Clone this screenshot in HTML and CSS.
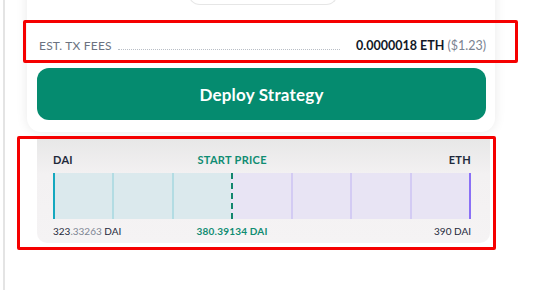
FILE: index.html
```html
<!DOCTYPE html>
<html lang="en">
<head>
    <meta charset="UTF-8">
    <meta name="viewport" content="width=device-width, initial-scale=1.0">
    <title>Deploy Strategy</title>
    <link rel="stylesheet" href="styles.css">
</head>
<body>
    <div class="page">
        <div class="rail"></div>
        <div class="main">
            <div class="card">
                <div class="pill"></div>
                <div class="fees">
                    <span class="fees-label">EST. TX FEES</span>
                    <span class="fees-dots"></span>
                    <span class="fees-value">0.0000018 ETH <span class="muted">($1.23)</span></span>
                </div>
                <button class="deploy">Deploy Strategy</button>
            </div>

            <!-- price range preview -->
            <div class="range">
                <div class="range-row range-head">
                    <span class="col-left">DAI</span>
                    <span class="col-mid green">START PRICE</span>
                    <span class="col-right">ETH</span>
                </div>
                <div class="bar">
                    <div class="seg buy edge-left"></div>
                    <div class="seg buy"></div>
                    <div class="seg buy"></div>
                    <div class="seg sell start"></div>
                    <div class="seg sell"></div>
                    <div class="seg sell"></div>
                    <div class="seg sell edge-right"></div>
                </div>
                <div class="range-row range-foot">
                    <span class="col-left">323<span class="muted">.33263</span> DAI</span>
                    <span class="col-mid green">380.39134 DAI</span>
                    <span class="col-right">390 DAI</span>
                </div>
            </div>
        </div>
    </div>

    <!-- annotation boxes -->
    <div class="mark mark-fees"></div>
    <div class="mark mark-range"></div>
</body>
</html>
```

FILE: styles.css
```css
body {
    margin: 0;
    padding: 0;
    font-family: 'Lato', 'Inter', sans-serif;
    background-color: #fff;
    overflow: hidden;
}

.page {
    display: flex;
    height: 290px;
}

.rail {
    width: 2px;
    margin-left: 3px;
    background-color: #e4e4e4;
}

.main {
    margin-left: 22px;
    width: 468px;
}

.card {
    margin-top: -20px;
    padding: 0 9px 12px 10px;
    background-color: #fff;
    border-radius: 0 0 14px 14px;
    box-shadow: 0 0 12px rgba(0, 0, 0, 0.09);
}

.pill {
    width: 148px;
    height: 24px;
    margin-left: 151px;
    border: 1px solid #e6e6e6;
    border-top: none;
    border-radius: 0 0 12px 12px;
}

.fees {
    display: flex;
    align-items: baseline;
    gap: 6px;
    margin-top: 30px;
    padding-left: 2px;
    height: 22px;
    line-height: 22px;
    font-size: 12px;
}

.fees-label {
    color: #6b7280;
    letter-spacing: 0.2px;
}

.fees-dots {
    flex: 1;
    border-bottom: 1px dotted #b9bec6;
    margin-right: 10px;
}

.fees-value {
    color: #111827;
    font-weight: 700;
    font-size: 12.5px;
}

.muted {
    color: #7b8391;
    font-weight: 400;
}

.deploy {
    display: block;
    width: 449px;
    height: 52px;
    margin-top: 11px;
    border: none;
    border-radius: 12px;
    background-color: #058b6f;
    color: #fff;
    font-family: 'Lato', sans-serif;
    font-size: 17px;
    font-weight: 700;
    letter-spacing: 0.2px;
    cursor: pointer;
}

.range {
    margin: 6px 0 0 10px;
    width: 453px;
    padding: 14px 19px 5px 16px;
    box-sizing: border-box;
    border-radius: 0 0 10px 10px;
    background: linear-gradient(#e7e7e7, #f3f1f2 35%, #f5f3f4);
}

/* 14 columns so the middle label sits on the 3/7 start line */
.range-row {
    display: grid;
    grid-template-columns: repeat(14, 1fr);
    color: #1e293b;
    white-space: nowrap;
}

.col-left {
    grid-column: 1 / 5;
}

.col-mid {
    grid-column: 5 / 9;
    text-align: center;
}

.col-right {
    grid-column: 9 / 15;
    text-align: right;
}

.range-head {
    font-size: 11px;
    font-weight: 700;
    letter-spacing: 0.3px;
    height: 16px;
    line-height: 16px;
}

.range-foot {
    font-size: 10px;
    margin-top: 5px;
    height: 14px;
    line-height: 14px;
}

.range-foot .green {
    font-weight: 700;
    letter-spacing: 0.2px;
}

.range-foot .muted {
    color: #7d8593;
}

.green {
    color: #0f8c72;
}

.bar {
    display: flex;
    height: 46px;
    margin-top: 5px;
}

.seg {
    flex: 1;
}

.seg.buy {
    background-color: #dbe9ed;
    border-left: 2px solid #b3dce3;
}

.seg.sell {
    background-color: #e8e4f4;
    border-left: 2px solid #d3cbf3;
}

.seg.edge-left {
    border-left-color: #14a8bf;
}

.seg.start {
    border-left: 2px dashed #12866d;
}

.seg.edge-right {
    border-right: 2px solid #8a70f6;
}

.mark {
    position: absolute;
    border: 3px solid #f50000;
    border-radius: 2px;
    box-sizing: border-box;
}

.mark-fees {
    left: 23px;
    top: 20px;
    width: 495px;
    height: 43px;
}

.mark-range {
    left: 17px;
    top: 136px;
    width: 479px;
    height: 114px;
}
```
